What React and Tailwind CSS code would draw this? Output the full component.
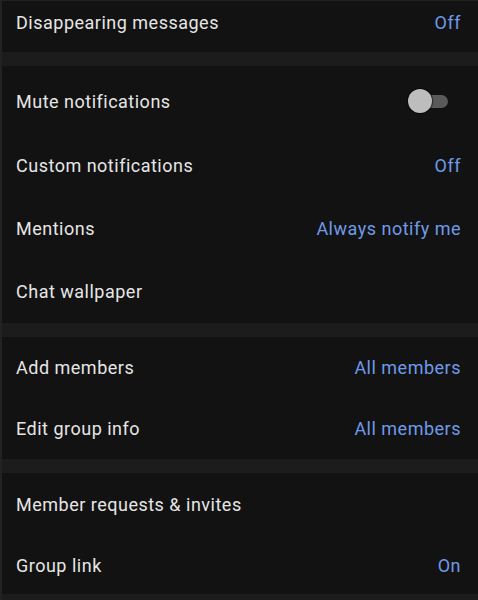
import React from "react";

const Row = ({ label, value, h, pt = 0 }) => (
  <div
    className="flex items-center justify-between pl-4 pr-[17px]"
    style={{ height: h, paddingTop: pt }}
  >
    <span className="text-[18px] tracking-[0.5px] text-[#e6e6e6]">{label}</span>
    {value && <span className="text-[18px] tracking-[0.5px] text-[#6f9ae9]">{value}</span>}
  </div>
);

const Sep = () => <div className="h-[14px] bg-[#1c1c1c]" />;

export default function App() {
  return (
    <div
      className="w-[478px] h-[600px] overflow-hidden bg-[#121212] border-l-2 border-t border-[#222222]"
      style={{ fontFamily: "Roboto, 'Noto Sans', sans-serif" }}
    >
      <div className="flex items-center justify-between pl-[14px] pr-[17px] h-[43px] mb-[8px]">
        <span className="text-[18px] tracking-[0.5px] text-[#e6e6e6]">Disappearing messages</span>
        <span className="text-[18px] tracking-[0.5px] text-[#6f9ae9]">Off</span>
      </div>
      <Sep />
      <div className="flex flex-col">
        <div className="flex items-center justify-between pl-[14px] pr-[30px] h-[68px] pt-[2px]">
          <span className="text-[18px] tracking-[0.5px] text-[#e6e6e6]">Mute notifications</span>
          <div className="relative w-[40px] h-[24px] flex items-center">
            <div className="absolute left-[2px] right-0 h-[13px] rounded-full bg-[#5a5a5a]" />
            <div className="absolute left-0 w-[24px] h-[24px] rounded-full bg-[#bdbdbd] shadow-[0_0_1px_1px_rgba(0,0,0,0.6)]" />
          </div>
        </div>
        <div className="flex flex-col -ml-[2px]">
          <Row label="Custom notifications" value="Off" h={63} />
          <Row label="Mentions" value="Always notify me" h={63} />
          <Row label="Chat wallpaper" h={63} />
        </div>
      </div>
      <Sep />
      <div className="flex flex-col -ml-[2px]">
        <Row label="Add members" value="All members" h={61} />
        <Row label="Edit group info" value="All members" h={61} />
      </div>
      <Sep />
      <div className="flex flex-col -ml-[2px]">
        <Row label="Member requests & invites" h={62} />
        <Row label="Group link" value="On" h={59} pt={2} />
      </div>
      <div className="h-[10px] bg-[#1c1c1c]" />
    </div>
  );
}
